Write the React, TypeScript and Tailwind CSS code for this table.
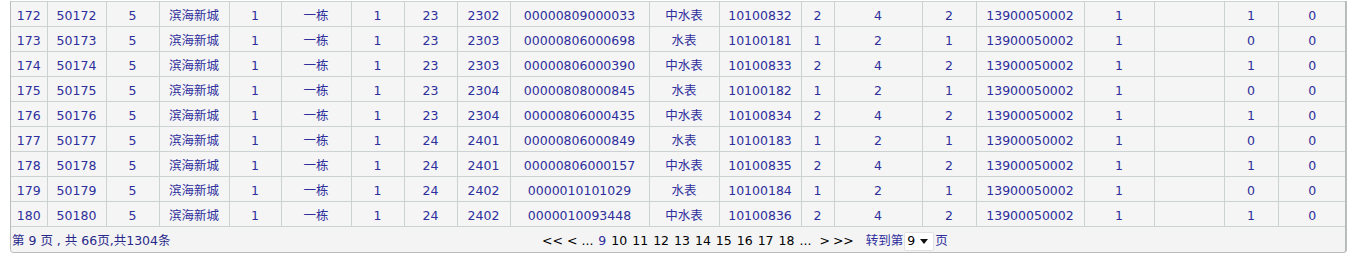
import React from "react";

const widths = [36, 59, 53, 70, 52, 70, 53, 53, 53, 139, 70, 82, 33, 88, 54, 108, 70, 70, 54, 68];

const rows: string[][] = [
  ["172", "50172", "5", "滨海新城", "1", "一栋", "1", "23", "2302", "00000809000033", "中水表", "10100832", "2", "4", "2", "13900050002", "1", "", "1", "0"],
  ["173", "50173", "5", "滨海新城", "1", "一栋", "1", "23", "2303", "00000806000698", "水表", "10100181", "1", "2", "1", "13900050002", "1", "", "0", "0"],
  ["174", "50174", "5", "滨海新城", "1", "一栋", "1", "23", "2303", "00000806000390", "中水表", "10100833", "2", "4", "2", "13900050002", "1", "", "1", "0"],
  ["175", "50175", "5", "滨海新城", "1", "一栋", "1", "23", "2304", "00000808000845", "水表", "10100182", "1", "2", "1", "13900050002", "1", "", "0", "0"],
  ["176", "50176", "5", "滨海新城", "1", "一栋", "1", "23", "2304", "00000806000435", "中水表", "10100834", "2", "4", "2", "13900050002", "1", "", "1", "0"],
  ["177", "50177", "5", "滨海新城", "1", "一栋", "1", "24", "2401", "00000806000849", "水表", "10100183", "1", "2", "1", "13900050002", "1", "", "0", "0"],
  ["178", "50178", "5", "滨海新城", "1", "一栋", "1", "24", "2401", "00000806000157", "中水表", "10100835", "2", "4", "2", "13900050002", "1", "", "1", "0"],
  ["179", "50179", "5", "滨海新城", "1", "一栋", "1", "24", "2402", "0000010101029", "水表", "10100184", "1", "2", "1", "13900050002", "1", "", "0", "0"],
  ["180", "50180", "5", "滨海新城", "1", "一栋", "1", "24", "2402", "0000010093448", "中水表", "10100836", "2", "4", "2", "13900050002", "1", "", "1", "0"],
];

const pages = ["10", "11", "12", "13", "14", "15", "16", "17", "18"];

export default function App() {
  return (
    <div
      className="w-[1356px] h-[259px] bg-white pt-px text-[#2e2e9c]"
      style={{ fontFamily: '"DejaVu Sans", Verdana, "Noto Sans CJK SC", sans-serif' }}
    >
      <div className="ml-[10px] w-[1337px] border-l border-r-[2px] border-b border-[#b8bcbc] rounded-b-[4px] bg-[#f4f4f4] overflow-hidden">
        <table className="border-collapse table-fixed w-[1335px] text-[12.5px]">
          <colgroup>
            {widths.map((w, i) => (
              <col key={i} style={{ width: w }} />
            ))}
          </colgroup>
          <tbody>
            {rows.map((r, i) => (
              <tr key={i} className="h-[25px]">
                {r.map((c, j) => (
                  <td
                    key={j}
                    className="border border-[#ccd2d2] first:border-l-0 last:border-r-0 bg-[#f5f5f5] text-center p-0 pt-[4px] leading-none whitespace-nowrap"
                  >
                    {c}
                  </td>
                ))}
              </tr>
            ))}
          </tbody>
        </table>
        <div className="relative h-[25px] flex items-center pt-[4px] text-[12.5px] bg-[#f4f4f4]">
          <span className="pl-px text-[#28288a]">第 9 页 , 共 66页,共1304条</span>
          <div className="absolute left-[531px] top-0 h-full pt-[3px] flex items-center whitespace-nowrap">
            <span className="text-black">&lt;&lt;</span>
            <span className="ml-[4px] text-black">&lt;</span>
            <span className="ml-[4px] text-black">...</span>
            <span className="ml-[5px]">9</span>
            {pages.map((p) => (
              <span key={p} className="ml-[5px] text-black">
                {p}
              </span>
            ))}
            <span className="ml-[5px] text-black">...</span>
            <span className="ml-[8px] text-black">&gt;</span>
            <span className="ml-[3px] text-black">&gt;&gt;</span>
            <span className="ml-[12px]">转到第</span>
            <span className="ml-[1px] h-[19px] w-[30px] bg-white border border-[#e2e2e2] rounded-[2px] flex items-center justify-between pl-[2px] pr-[5px] text-black">
              <span>9</span>
              <svg width="8" height="5" viewBox="0 0 8 5">
                <path d="M0 0h8L4 5z" fill="#111" />
              </svg>
            </span>
            <span className="ml-[1px]">页</span>
          </div>
        </div>
      </div>
    </div>
  );
}
